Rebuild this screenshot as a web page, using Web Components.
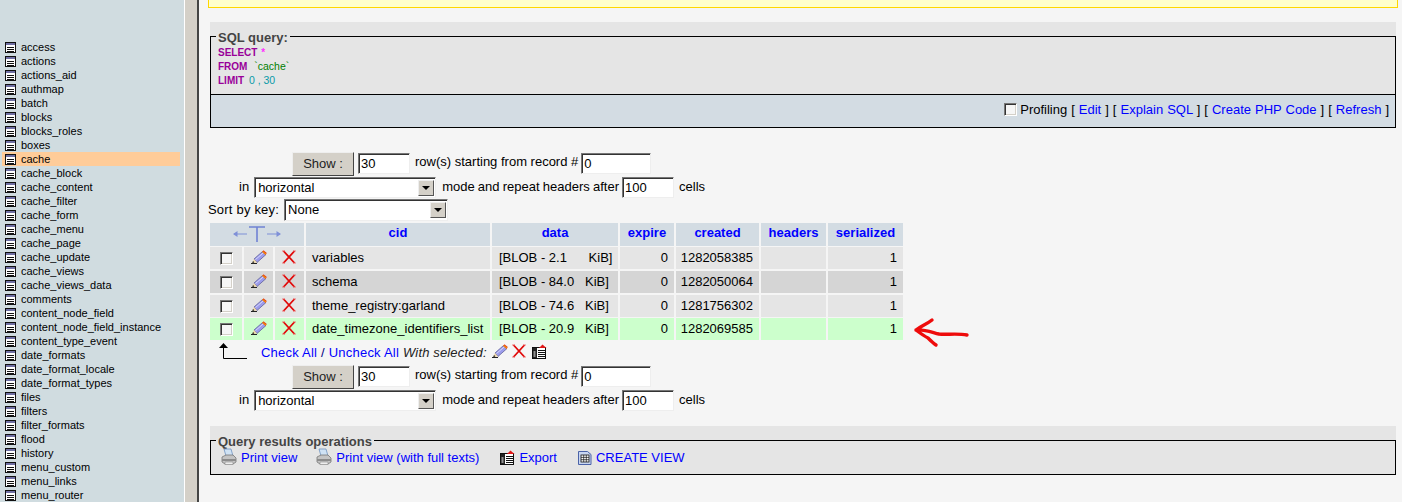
<!DOCTYPE html>
<html>
<head>
<meta charset="utf-8">
<title>phpMyAdmin</title>
<style>
  html, body { margin: 0; padding: 0; height: 502px; overflow: hidden; background: #f5f5f5; }
  body { display: flex; font-family: "Liberation Sans", Arial, sans-serif; font-size: 13px; color: #000; }
</style>
</head>
<body>
<pma-sidebar active="cache"></pma-sidebar>
<pma-splitter></pma-splitter>
<pma-main>
  <pma-notice></pma-notice>
  <pma-sql-box></pma-sql-box>
  <pma-nav-form sort style="margin-top:24px"></pma-nav-form>
  <pma-results></pma-results>
  <pma-nav-form style="margin-top:1px"></pma-nav-form>
  <pma-ops></pma-ops>
</pma-main>

<script>
const ICONS = {
  table: `<svg width="11" height="11" viewBox="0 0 11 11"><rect x=".5" y=".5" width="10" height="10" fill="#fff" stroke="#111"/><rect x="1" y="1" width="9" height="2" fill="#6f6fa3"/><path d="M2 5.5h7M2 7.5h7M2 9.5h7" stroke="#111"/></svg>`,
  pencil: `<svg width="16" height="14" viewBox="0 0 16 14"><path d="M3 9 L11.5 1.5 L15 4.5 L6 12.5 Z" fill="#9c9cec" stroke="#55558f" stroke-width=".7"/><path d="M4.5 9.5 L12.5 2.7" stroke="#d8d8fa" stroke-width="1"/><path d="M11 2 L12.5 .3 L15.8 3 L14.6 5 Z" fill="#e8401c"/><path d="M11.6 1.6 L15 4.2" stroke="#f4b400" stroke-width="1"/><path d="M3 9 L1.4 12.8 L6 12.5 Z" fill="#efd7a8"/><path d="M1.2 13 L3.4 12.6 L2 11 Z" fill="#111"/><path d="M0 13.5h6" stroke="#222"/></svg>`,
  cross: `<svg width="14" height="14" viewBox="0 0 14 14"><path d="M1.5 1 L12.5 13 M12.5 1 L1.5 13" stroke="#e00808" stroke-width="1.8"/><path d="M0 1h3M11 1h3M0 13h3M11 13h3" stroke="#f06060" stroke-width=".8"/></svg>`,
  export: `<svg width="15" height="15" viewBox="0 0 15 15"><rect x=".5" y="3.5" width="13" height="11" fill="#fff" stroke="#111"/><rect x="1" y="4" width="4" height="10" fill="#222"/><path d="M6 6.5h7M6 8.5h7M6 10.5h7M6 12.5h7" stroke="#111"/><path d="M1.5 8h2M1.5 10h2M1.5 12h2" stroke="#fff"/><path d="M7 4 L10.5 .5 L14.5 4 Z" fill="#e01818"/></svg>`,
  print: `<svg width="16" height="18" viewBox="0 0 16 18"><path d="M3 1h7l2 7H5z" fill="#cfe2f4" stroke="#6f93c0" stroke-width=".8"/><path d="M1 9 L5 7h7l3 3v4l-3 2H4l-3-2z" fill="#c4c4c4" stroke="#777" stroke-width=".8"/><path d="M1 11h14v2H1z" fill="#8c8c8c"/><path d="M4 14h8v2.5H4z" fill="#eee" stroke="#888" stroke-width=".6"/></svg>`,
  view: `<svg width="14" height="15" viewBox="0 0 14 15"><path d="M.5 1.5h9l3.5 3v10H.5z" fill="#c9d6f0" stroke="#4a62a8"/><rect x="3" y="5" width="8" height="7" fill="#fff" stroke="#111" stroke-width=".8"/><path d="M3 7.4h8M3 9.7h8M5.7 5v7M8.3 5v7" stroke="#111" stroke-width=".7"/></svg>`
};

class PmaIcon extends HTMLElement {
  connectedCallback() {
    if (this.shadowRoot) return;
    this.attachShadow({ mode: 'open' });
    this.shadowRoot.innerHTML = `<style>:host{display:inline-flex;flex:none}svg{display:block}</style>` + ICONS[this.getAttribute('name')];
  }
}
customElements.define('pma-icon', PmaIcon);

class PmaCheck extends HTMLElement {
  constructor() {
    super();
    this.attachShadow({ mode: 'open' });
    this.shadowRoot.innerHTML = `<style>
      :host { display: block; width: 13px; height: 13px; box-sizing: border-box; background: #f6f6f6;
        border: 1px solid; border-color: #777 #fff #fff #777; box-shadow: inset 1px 1px 0 #333, inset -1px -1px 0 #d4d0c8; }
    </style>`;
  }
}
customElements.define('pma-check', PmaCheck);

class PmaSidebarItem extends HTMLElement {
  constructor() {
    super();
    this.attachShadow({ mode: 'open' });
    this.shadowRoot.innerHTML = `<style>
      :host { display: flex; align-items: center; gap: 5px; height: 14px; margin-left: 2px; width: 178px;
        padding-left: 3px; box-sizing: border-box; font-size: 11px; white-space: nowrap; color: #000; }
      :host([active]) { background: #ffcc99; }
    </style><pma-icon name="table"></pma-icon><span><slot></slot></span>`;
  }
}
customElements.define('pma-sidebar-item', PmaSidebarItem);

class PmaSidebar extends HTMLElement {
  constructor() {
    super();
    this.attachShadow({ mode: 'open' });
    this.shadowRoot.innerHTML = `<style>
      :host { display: block; flex: none; width: 184px; height: 502px; padding-top: 40px; box-sizing: border-box;
        overflow: hidden; background: #d0dce0; }
    </style><slot></slot>`;
  }
  connectedCallback() {
    const names = ['access','actions','actions_aid','authmap','batch','blocks','blocks_roles','boxes','cache','cache_block','cache_content','cache_filter','cache_form','cache_menu','cache_page','cache_update','cache_views','cache_views_data','comments','content_node_field','content_node_field_instance','content_type_event','date_formats','date_format_locale','date_format_types','files','filters','filter_formats','flood','history','menu_custom','menu_links','menu_router'];
    const active = this.getAttribute('active');
    for (const n of names) {
      const it = document.createElement('pma-sidebar-item');
      it.textContent = n;
      if (n === active) it.setAttribute('active', '');
      this.appendChild(it);
    }
  }
}
customElements.define('pma-sidebar', PmaSidebar);

class PmaSplitter extends HTMLElement {
  constructor() {
    super();
    this.attachShadow({ mode: 'open' });
    this.shadowRoot.innerHTML = `<style>
      :host { display: block; flex: none; width: 15px; box-sizing: border-box; background: #d4d0c8;
        border-left: 1px solid #fff; border-right: 2px solid; border-right-color: #444; box-shadow: 1px 0 0 #fff; }
    </style>`;
  }
}
customElements.define('pma-splitter', PmaSplitter);

class PmaMain extends HTMLElement {
  constructor() {
    super();
    this.attachShadow({ mode: 'open' });
    this.shadowRoot.innerHTML = `<style>
      :host { display: block; flex: 1; min-width: 0; padding: 0 4px 0 9px; background: #f5f5f5; }
    </style><slot></slot>`;
  }
}
customElements.define('pma-main', PmaMain);

class PmaNotice extends HTMLElement {
  constructor() {
    super();
    this.attachShadow({ mode: 'open' });
    this.shadowRoot.innerHTML = `<style>
      :host { display: block; height: 8px; box-sizing: border-box; background: #ffffcc;
        border: 1px solid #ffd700; border-top: 0; }
    </style>`;
  }
}
customElements.define('pma-notice', PmaNotice);

const BOX_CSS = `
  fieldset { margin: 0; padding: 0; border: 1px solid #000; min-width: 0; }
  legend { margin-left: 5px; padding: 2px 2px 0; font-size: 13px; line-height: 15px; font-weight: bold; color: #444; }
`;

class PmaSqlBox extends HTMLElement {
  constructor() {
    super();
    this.attachShadow({ mode: 'open' });
    this.shadowRoot.innerHTML = `<style>${BOX_CSS}
      :host { display: block; margin: 14px 2px 0; }
      .top { background: #e5e5e5; padding-top: 6px; }
      fieldset { height: 67px; box-sizing: border-box; }
      pre { margin: 0; padding: 1px 0 0 7px; font: 10px/14px "Liberation Sans", Arial, sans-serif; font-weight: bold; }
      .k { color: #990099; margin-right: 2px; } .s { color: #ff33ff; margin-left: -1px; }
      .q { color: #008000; font-weight: normal; font-size: 10.5px; line-height: 1; margin-left: 2px; }
      .n { color: #0a9aa8; font-weight: normal; font-size: 10.5px; line-height: 1; }
      .bar { display: flex; justify-content: flex-end; align-items: center; gap: 3px; height: 33px; padding: 0 6px 4px 0;
        background: #d3dce3; border: 1px solid #000; border-top: 0; box-sizing: border-box; white-space: pre; font-size: 13px; word-spacing: .4px; }
      .bar pma-check { margin-top: 1px; }
      a { color: #0000ff; text-decoration: none; }
    </style>
    <div class="top"><fieldset><legend>SQL query:</legend>
<pre><span class="k">SELECT</span> <span class="s">*</span>
<span class="k">FROM</span> <span class="q">\`cache\`</span>
<span class="k">LIMIT</span> <span class="n">0 , 30</span></pre>
    </fieldset></div>
    <div class="bar"><pma-check></pma-check><span>Profiling [ <a href="#">Edit</a> ] [ <a href="#">Explain SQL</a> ] [ <a href="#">Create PHP Code</a> ] [ <a href="#">Refresh</a> ]</span></div>`;
  }
}
customElements.define('pma-sql-box', PmaSqlBox);

class PmaInput extends HTMLElement {
  constructor() {
    super();
    this.attachShadow({ mode: 'open' });
    this.shadowRoot.innerHTML = `<style>
      :host { display: block; flex: none; box-sizing: border-box; height: 21px; padding: 1px 2px 0; line-height: 18px; font-size: 13px;
        background: #fff; border: 1px solid; border-color: #777 #eee #eee #777; box-shadow: inset 1px 1px 0 #333; }
    </style><slot></slot>`;
  }
}
customElements.define('pma-input', PmaInput);

class PmaSelect extends HTMLElement {
  constructor() {
    super();
    this.attachShadow({ mode: 'open' });
    this.shadowRoot.innerHTML = `<style>
      :host { display: flex; flex: none; box-sizing: border-box; height: 21px; background: #fff; font-size: 13px; line-height: 17px;
        border: 1px solid; border-color: #777 #eee #eee #777; box-shadow: inset 1px 1px 0 #333; padding: 1px 0 0 1px; }
      span { flex: 1; padding-left: 2px; }
      i { flex: none; width: 16px; height: 16px; margin: 1px 1px 0 0; box-sizing: border-box; background: #d4d0c8; position: relative;
        border: 1px solid; border-color: #eee #555 #555 #eee; }
      i::after { content: ""; position: absolute; left: 3px; top: 5px; border: 4px solid transparent; border-top-color: #000; border-bottom: 0; }
    </style><span><slot></slot></span><i></i>`;
  }
}
customElements.define('pma-select', PmaSelect);

class PmaNavForm extends HTMLElement {
  constructor() {
    super();
    this.attachShadow({ mode: 'open' });
    this.shadowRoot.innerHTML = `<style>
      :host { display: block; font-size: 13px; }
      .row { display: flex; align-items: center; white-space: nowrap; }
      .row > span { padding-bottom: 2px; }
      .r1 { padding-left: 84px; height: 24px; align-items: flex-start; }
      .r1 > span { margin: 2px 3px 0 5px; line-height: 16px; padding: 0; }
      .r2 { padding-left: 31px; height: 21px; margin-top: 1px; }
      .r3 { height: 22px; margin-top: 1px; }
      .btn { flex: none; width: 62px; height: 24px; box-sizing: border-box; text-align: center; line-height: 22px; margin-right: 4px;
        background: #d4d0c8; border: 1px solid; border-color: #eee #444 #444 #eee; color: #222; }
      pma-input { margin-top: 1px; }
    </style>
    <div class="row r1"><div class="btn">Show :</div><pma-input style="width:52px">30</pma-input><span>row(s) starting from record #</span><pma-input style="width:70px">0</pma-input></div>
    <div class="row r2"><span style="margin-right:5px">in</span><pma-select style="width:182px">horizontal</pma-select><span style="margin:0 3px 0 6px;word-spacing:-.4px">mode and repeat headers after</span><pma-input style="width:52px;margin:0">100</pma-input><span style="margin-left:5px">cells</span></div>`;
  }
  connectedCallback() {
    if (this.hasAttribute('sort') && !this.shadowRoot.querySelector('.r3')) {
      const r = document.createElement('div');
      r.className = 'row r3';
      r.innerHTML = `<span style="margin-right:5px;letter-spacing:.2px">Sort by key:</span><pma-select style="width:164px;height:22px">None</pma-select>`;
      this.shadowRoot.appendChild(r);
    }
  }
}
customElements.define('pma-nav-form', PmaNavForm);

const COLS = '32px 29px 29px 184px 126px 54px 83px 65px 75px';

class PmaRow extends HTMLElement {
  constructor() {
    super();
    this.attachShadow({ mode: 'open' });
  }
  connectedCallback() {
    const [cid, blob, exp, created, ser] = JSON.parse(this.getAttribute('data'));
    this.shadowRoot.innerHTML = `<style>
      :host { display: grid; grid-template-columns: ${COLS}; column-gap: 2px; height: 22px; margin-top: 2px; font-size: 13px; white-space: pre; }
      div { background: var(--bg); display: flex; align-items: center; padding: 0 6px 2px; box-sizing: border-box; height: 22px; }
      .c { justify-content: center; padding: 0; }
      .r { justify-content: flex-end; }
      .ic pma-icon { margin-bottom: 3px; }
    </style>
    <div class="c"><pma-check></pma-check></div>
    <div class="c ic"><pma-icon name="pencil"></pma-icon></div>
    <div class="c ic" style="padding-right:2px"><pma-icon name="cross"></pma-icon></div>
    <div>${cid}</div><div style="padding-left:7px">${blob}</div><div class="r">${exp}</div><div class="r">${created}</div><div></div><div class="r">${ser}</div>`;
  }
}
customElements.define('pma-row', PmaRow);

class PmaResults extends HTMLElement {
  constructor() {
    super();
    this.attachShadow({ mode: 'open' });
    const rows = [
      ['variables', '[BLOB - 2.1\u00a0\u00a0\u00a0\u00a0\u00a0\u00a0KiB]', '0', '1282058385', '1', '#e5e5e5', 1],
      ['schema', '[BLOB - 84.0\u00a0\u00a0\u00a0KiB]', '0', '1282050064', '1', '#d5d5d5', 2],
      ['theme_registry:garland', '[BLOB - 74.6\u00a0\u00a0\u00a0KiB]', '0', '1281756302', '1', '#e5e5e5', 2],
      ['date_timezone_identifiers_list', '[BLOB - 20.9\u00a0\u00a0\u00a0KiB]', '0', '1282069585', '1', '#ccffcc', 1]
    ];
    this.shadowRoot.innerHTML = `<style>
      :host { display: block; position: relative; margin: 2px 0 0 2px; }
      .head { display: grid; grid-template-columns: 94px 184px 126px 54px 83px 65px 75px; column-gap: 2px; height: 23px; }
      .head div { background: #d3dce3; color: #0000ff; font-weight: bold; font-size: 13px; display: flex; align-items: center; justify-content: center; padding-bottom: 5px; box-sizing: border-box; }
      .head div:first-child { padding: 0; }
      .act { display: flex; align-items: flex-start; height: 24px; white-space: nowrap; padding: 3px 0 0 9px; box-sizing: border-box; }
      .act a { color: #0000ff; text-decoration: none; }
      .act .t { margin: 2px 0 0 13px; line-height: 15px; letter-spacing: .22px; }
      .act .sl { color: #000080; }
      .act em { margin: 2px 5px 0 4px; line-height: 15px; color: #222; letter-spacing: .15px; }
      .act pma-icon { margin: 1px 4px 0 0; }
      .act pma-icon[name=cross] { margin-right: 6px; }
      .note { position: absolute; left: 702px; top: 94px; pointer-events: none; }
    </style>
    <div class="head"><div><svg width="48" height="18" viewBox="0 0 48 18"><path d="M1 8h13M34 8h13" stroke="#7f90d8" stroke-width="1.2"/><path d="M0 8l4.5-3v6zM48 8l-4.5-3v6z" fill="#7f90d8"/><path d="M16 1h16M24 1v15" stroke="#7083d4" stroke-width="1.6"/></svg></div>
      <div>cid</div><div>data</div><div>expire</div><div>created</div><div>headers</div><div>serialized</div></div>
    ${rows.map(r => `<pma-row style="--bg:${r[5]};margin-top:${r[6]}px" data='${JSON.stringify(r.slice(0, 5))}'></pma-row>`).join('')}
    <div class="act"><svg width="29" height="16" viewBox="0 0 29 16" style="flex:none"><path d="M4.5 4v11.5H28" fill="none" stroke="#000"/><path d="M4.5 0L9 5H0z" fill="#000"/></svg>
      <span class="t"><a href="#">Check All</a> <span class="sl">/</span> <a href="#">Uncheck All</a></span>
      <em>With selected:</em><pma-icon name="pencil"></pma-icon><pma-icon name="cross"></pma-icon><pma-icon name="export"></pma-icon></div>
    <svg class="note" width="60" height="34" viewBox="0 0 60 34"><path d="M20 3 C15 7 9 9 4 13 C8 16 12 19 16 21 C19 24 21 26 24 28 M4 13 C12 12 19 15 27 17 C34 18 45 16 55 18" fill="none" stroke="#ee0b0b" stroke-width="3.4" stroke-linecap="round" stroke-linejoin="round"/></svg>`;
  }
}
customElements.define('pma-results', PmaResults);

class PmaOpLink extends HTMLElement {
  constructor() {
    super();
    this.attachShadow({ mode: 'open' });
    this.shadowRoot.innerHTML = `<style>
      :host { display: inline-flex; align-items: center; gap: 4px; color: #0000ff; font-size: 13px; white-space: nowrap; }
    </style><pma-icon name="${this.getAttribute('icon')}"></pma-icon><slot></slot>`;
  }
}
customElements.define('pma-op-link', PmaOpLink);

class PmaOps extends HTMLElement {
  constructor() {
    super();
    this.attachShadow({ mode: 'open' });
    this.shadowRoot.innerHTML = `<style>${BOX_CSS}
      :host { display: block; margin: 15px 2px 0; background: #e5e5e5; padding-top: 6px; }
      fieldset { height: 43px; box-sizing: border-box; }
      .row { display: flex; align-items: center; height: 16px; padding-left: 10px; }
      pma-op-link:nth-child(1) { margin-right: 19px; }
      pma-op-link:nth-child(2) { margin-right: 21px; }
      pma-op-link:nth-child(3) { margin-right: 21px; }
    </style>
    <fieldset><legend>Query results operations</legend>
      <div class="row">
        <pma-op-link icon="print">Print view</pma-op-link>
        <pma-op-link icon="print">Print view (with full texts)</pma-op-link>
        <pma-op-link icon="export">Export</pma-op-link>
        <pma-op-link icon="view">CREATE VIEW</pma-op-link>
      </div>
    </fieldset>`;
  }
}
customElements.define('pma-ops', PmaOps);
</script>
</body>
</html>
